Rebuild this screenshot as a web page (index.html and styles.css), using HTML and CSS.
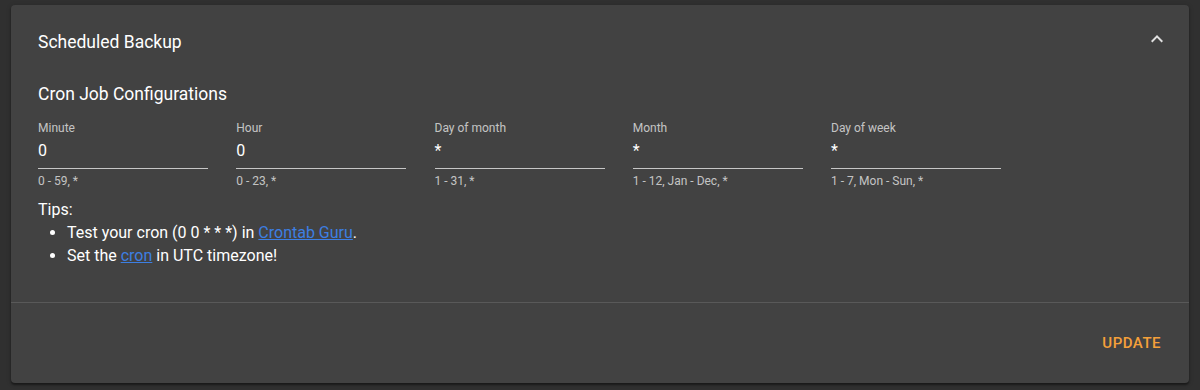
FILE: index.html
```html
<!DOCTYPE html>
<html lang="en">
<head>
    <meta charset="UTF-8">
    <meta name="viewport" content="width=device-width, initial-scale=1.0">
    <title>Scheduled Backup</title>
    <link rel="stylesheet" href="styles.css">
</head>
<body>
    <div class="panel">
        <div class="panel-header">
            <span class="panel-title">Scheduled Backup</span>
            <svg class="chevron" width="24" height="24" viewBox="0 0 24 24">
                <path d="M7.41 15.41 12 10.83l4.59 4.58L18 14l-6-6-6 6z" fill="#e0e0e0"/>
            </svg>
        </div>

        <div class="panel-body">
            <h2 class="section-title">Cron Job Configurations</h2>

            <div class="fields">
                <div class="field">
                    <label>Minute</label>
                    <div class="input">0</div>
                    <div class="hint">0 - 59, *</div>
                </div>
                <div class="field">
                    <label>Hour</label>
                    <div class="input">0</div>
                    <div class="hint">0 - 23, *</div>
                </div>
                <div class="field">
                    <label>Day of month</label>
                    <div class="input">*</div>
                    <div class="hint">1 - 31, *</div>
                </div>
                <div class="field">
                    <label>Month</label>
                    <div class="input">*</div>
                    <div class="hint">1 - 12, Jan - Dec, *</div>
                </div>
                <div class="field">
                    <label>Day of week</label>
                    <div class="input">*</div>
                    <div class="hint">1 - 7, Mon - Sun, *</div>
                </div>
            </div>

            <div class="tips">
                Tips:
                <ul>
                    <li>Test your cron (0 0 * * *) in <a href="#">Crontab Guru</a>.</li>
                    <li>Set the <a href="#">cron</a> in UTC timezone!</li>
                </ul>
            </div>
        </div>

        <div class="panel-actions">
            <button>Update</button>
        </div>
    </div>
</body>
</html>
```

FILE: styles.css
```css
body {
    margin: 0;
    padding: 5px 11px 7px 11px;
    background: #303030;
    font-family: Roboto, "Liberation Sans", sans-serif;
    color: #fff;
}
.panel {
    background: #424242;
    border-radius: 4px;
    box-shadow: 0 2px 2px rgba(0,0,0,0.4), 0 1px 5px rgba(0,0,0,0.2);
}
.panel-header {
    display: flex;
    align-items: center;
    justify-content: space-between;
    height: 77px;
    padding: 0 20px 0 27px;
}
.panel-title {
    font-size: 17.5px;
    margin-top: -3px;
}
.chevron {
    margin-top: -10px;
}
.panel-body {
    padding: 0 27px 35px 27px;
}
.section-title {
    margin: 0;
    font-size: 17.5px;
    font-weight: 400;
    line-height: 24px;
}
.fields {
    display: flex;
    gap: 28.25px;
    margin-top: 14px;
}
.field {
    width: 170px;
}
.field label {
    display: block;
    font-size: 12px;
    line-height: 16px;
    color: rgba(255,255,255,0.7);
}
.input {
    font-size: 16px;
    line-height: 20px;
    padding: 5px 0 7px 0;
    border-bottom: 1px solid rgba(255,255,255,0.7);
}
.hint {
    font-size: 12px;
    line-height: 14px;
    margin-top: 5px;
    color: rgba(255,255,255,0.7);
}
.tips {
    margin-top: 10px;
    font-size: 16px;
    line-height: 23px;
}
.tips ul {
    margin: 0;
    padding-left: 29px;
}
.tips a {
    color: #3d7fe3;
}
.panel-actions {
    display: flex;
    justify-content: flex-end;
    align-items: center;
    height: 80px;
    padding: 0 20px;
    border-top: 1px solid rgba(255,255,255,0.12);
}
button {
    background: none;
    border: none;
    padding: 8px;
    font-family: inherit;
    font-size: 15px;
    font-weight: 500;
    text-transform: uppercase;
    letter-spacing: 0.5px;
    color: #f5a03a;
    cursor: pointer;
}
```
